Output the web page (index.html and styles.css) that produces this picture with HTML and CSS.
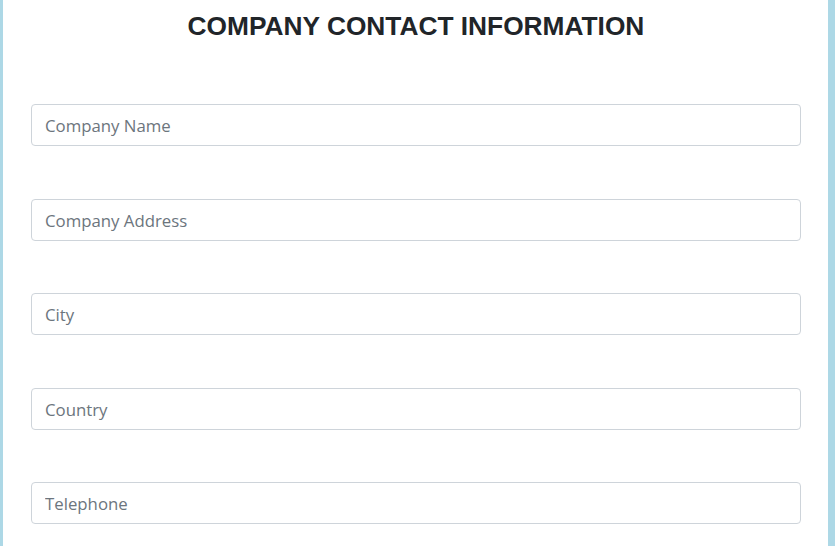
FILE: index.html
```html
<!DOCTYPE html>
<html>
<head>
<meta charset="utf-8">
<link rel="stylesheet" href="styles.css">
</head>
<body>
<div class="page">
  <h2 class="title">COMPANY CONTACT INFORMATION</h2>
  <form class="form">
    <input class="field" type="text" placeholder="Company Name">
    <input class="field" type="text" placeholder="Company Address">
    <input class="field" type="text" placeholder="City">
    <input class="field" type="text" placeholder="Country">
    <input class="field" type="text" placeholder="Telephone">
  </form>
</div>
</body>
</html>
```

FILE: styles.css
```css
html, body {
  margin: 0;
  padding: 0;
  height: 100%;
}
body {
  background: #add8e6;
  font-family: "Open Sans", "Noto Sans", sans-serif;
  overflow: hidden;
}
.page {
  background: #ffffff;
  margin: 0 7px 0 3px;
  min-height: 100%;
  padding: 10px 27px 0 28px;
  box-sizing: border-box;
}
.title {
  margin: 0;
  text-align: center;
  font-family: "Liberation Sans", Arial, sans-serif;
  font-weight: bold;
  font-size: 26.3px;
  line-height: 32px;
  color: #212529;
}
.form {
  display: flex;
  flex-direction: column;
  gap: 52.6px;
  margin-top: 62px;
}
.field {
  display: block;
  width: 100%;
  box-sizing: border-box;
  height: 42px;
  padding: 1px 13px 0;
  border: 1px solid #ced4da;
  border-radius: 4px;
  font-family: "Open Sans", "Noto Sans", sans-serif;
  font-size: 16.8px;
  color: #495057;
  background: #fff;
  outline: none;
}
.field::placeholder {
  color: #6c757d;
  opacity: 1;
}
```
